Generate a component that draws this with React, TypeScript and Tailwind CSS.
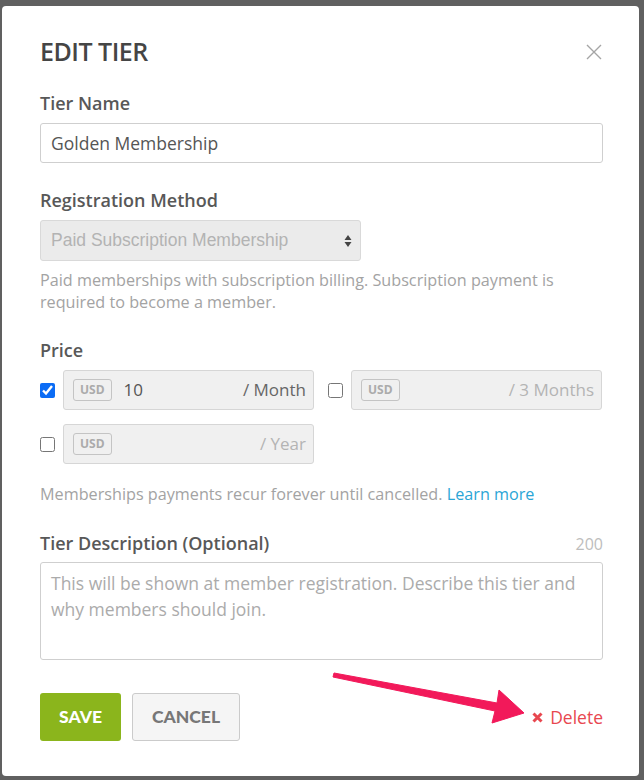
const font = { fontFamily: '"Open Sans", "Noto Sans", sans-serif' };

function PriceBox({
  checked,
  amount,
  unit,
  active,
}: {
  checked?: boolean;
  amount?: string;
  unit: string;
  active?: boolean;
}) {
  return (
    <div className="flex items-center gap-[8px]">
      <input
        type="checkbox"
        defaultChecked={checked}
        className="w-[15px] h-[15px] m-0 accent-[#0b6cf5]"
      />
      <div className="w-[251px] h-10 flex items-center rounded-[3px] border border-[#d6d6d6] bg-[#f0f0f0] pl-[9px] pr-[7px]">
        <span className="h-[22px] px-[6px] flex items-center rounded-[3px] border border-[#c4c4c4] text-[12px] font-bold text-[#ababab] leading-none">
          USD
        </span>
        <span className="ml-[12px] text-[17px] text-[#555]">{amount}</span>
        <span
          className={
            "ml-auto text-[17px] " + (active ? "text-[#666]" : "text-[#b4b4b4]")
          }
        >
          {unit}
        </span>
      </div>
    </div>
  );
}

export default function App() {
  return (
    <div className="w-[644px] h-[780px] bg-[#606060] pt-[6px] pl-[2px]" style={font}>
      <div className="relative w-[637px] h-[770px] bg-white rounded-[4px] pl-[38px] pr-[36px] pt-[30px]">
        {/* Шапка */}
        <div className="flex items-center justify-between h-8">
          <h1 className="text-[25px] font-semibold tracking-[-0.5px] text-[#454545]">
            EDIT TIER
          </h1>
          <svg width="16" height="16" viewBox="0 0 16 16" className="mr-[1px]">
            <path d="M1 1 L15 15 M15 1 L1 15" stroke="#a5a5a5" strokeWidth="1.4" />
          </svg>
        </div>

        <label className="block mt-[24px] mb-[9px] text-[18px] font-semibold leading-[22px] text-[#585858]">
          Tier Name
        </label>
        <div className="h-10 flex items-center rounded-[3px] border border-[#cfcfcf] px-[10px] text-[17.5px] text-[#555]">
          Golden Membership
        </div>

        <label className="block mt-[26px] mb-[9px] text-[18px] font-semibold leading-[22px] text-[#585858]">
          Registration Method
        </label>
        <div
          className="w-[321px] h-[41px] flex items-center justify-between rounded-[3px] border border-[#d9d9d9] bg-[#ebebeb] pl-[10px] pr-[8px] text-[17.5px] text-[#b3b3b3]"
          style={{ fontFamily: '"Liberation Sans", Arial, sans-serif' }}
        >
          Paid Subscription Membership
          <svg width="8" height="14" viewBox="0 0 8 14" className="text-[#444]">
            <path d="M4 1 L7.5 6 H0.5 Z M4 13 L7.5 8 H0.5 Z" fill="currentColor" />
          </svg>
        </div>
        <p className="mt-[8px] text-[16.2px] leading-[22px] text-[#a3a3a3] pr-[30px]">
          Paid memberships with subscription billing. Subscription payment is
          required to become a member.
        </p>

        <label className="block mt-[26px] mb-[9px] text-[18px] font-semibold leading-[22px] text-[#585858]">
          Price
        </label>
        <div className="flex flex-wrap gap-x-[14px] gap-y-[14px]">
          <PriceBox checked amount="10" unit="/ Month" active />
          <PriceBox unit="/ 3 Months" />
          <PriceBox unit="/ Year" />
        </div>
        <p className="mt-[19px] text-[16.2px] leading-[22px] text-[#a3a3a3]">
          Memberships payments recur forever until cancelled.{" "}
          <a className="text-[#2aa5d6]">Learn more</a>
        </p>

        <div className="mt-[27px] mb-[8px] flex items-end justify-between">
          <label className="text-[18px] font-semibold leading-[22px] text-[#585858]">
            Tier Description (Optional)
          </label>
          <span className="text-[16px] leading-[20px] text-[#bdbdbd]">200</span>
        </div>
        <div className="h-[98px] rounded-[3px] border border-[#cfcfcf] pl-[10px] pr-[20px] pt-[7px] text-[17.5px] leading-[26px] text-[#ababab]">
          This will be shown at member registration. Describe this tier and
          why members should join.
        </div>

        <div
          className="mt-[33px] flex items-center"
          style={{ fontFamily: "Lato, sans-serif" }}
        >
          <button className="h-12 w-[81px] rounded-[3px] bg-[#8bb51c] text-[17.5px] font-black text-white">
            SAVE
          </button>
          <button className="ml-[11px] h-12 w-[108px] rounded-[3px] border border-[#cbcbcb] bg-[#f5f5f5] text-[17.5px] font-black text-[#777]">
            CANCEL
          </button>
          <div
            className="ml-auto flex items-center gap-[7px] text-[17.5px] text-[#e8474f]"
            style={font}
          >
            <svg width="11" height="11" viewBox="0 0 11 11">
              <path d="M1.5 1.5 L9.5 9.5 M9.5 1.5 L1.5 9.5" stroke="#e8474f" strokeWidth="3" />
            </svg>
            Delete
          </div>
        </div>

        {/* Стрелка поверх */}
        <svg
          className="absolute left-0 top-0 pointer-events-none"
          width="637"
          height="770"
          viewBox="2 6 637 770"
        >
          <polygon
            points="334,673 497,703 499,690 524,713 492,723 495,711 333,677"
            fill="#f2195a"
            stroke="#f2195a"
            strokeWidth="1"
            strokeLinejoin="round"
          />
        </svg>
      </div>
    </div>
  );
}
